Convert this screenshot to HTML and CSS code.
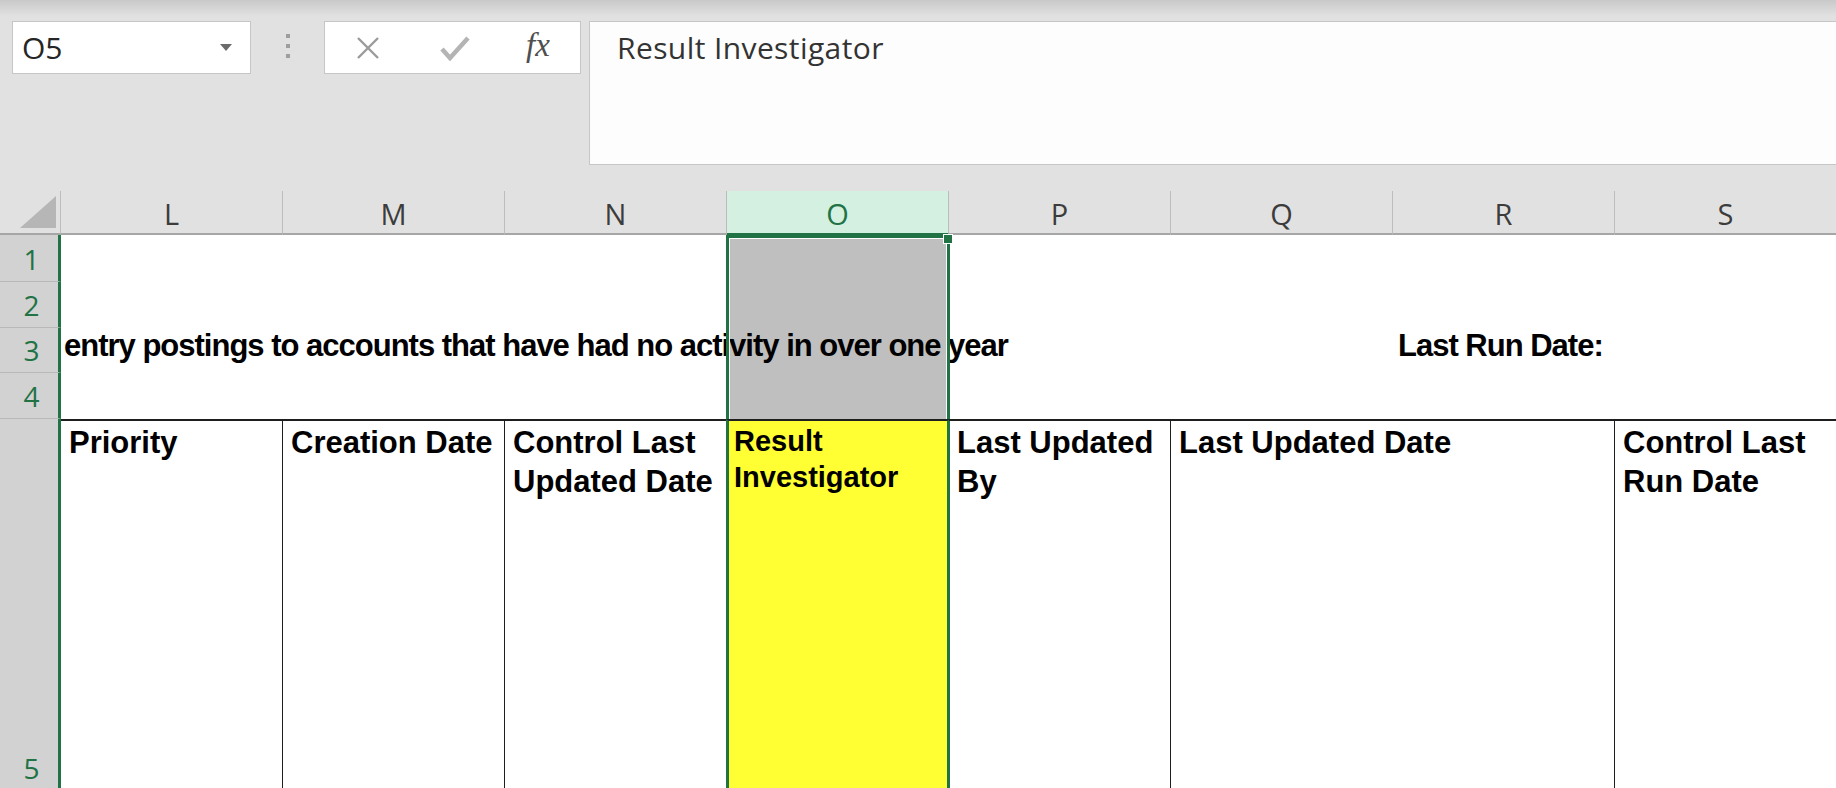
FILE: index.html
```html
<!DOCTYPE html>
<html lang="en">
<head>
    <meta charset="UTF-8">
    <title>Result Investigator</title>
    <link rel="stylesheet" href="styles.css">
</head>
<body>
    <div class="toolbar">
        <div class="namebox">
            <span class="namebox-ref">O5</span>
            <svg class="namebox-arrow" width="12" height="7" viewBox="0 0 12 7"><polygon points="0,0 12,0 6,7" fill="#6b6b6b"/></svg>
        </div>
        <div class="grip"><span></span><span></span><span></span></div>
        <div class="fx-buttons">
            <svg class="fx-icon" width="24" height="24" viewBox="0 0 24 24"><path d="M2 2 L22 22 M22 2 L2 22" stroke="#9b9b9b" stroke-width="2.4" fill="none"/></svg>
            <svg class="fx-icon" width="30" height="26" viewBox="0 0 30 26"><path d="M2 14 L10 23 L28 3" stroke="#b4b4b4" stroke-width="4.5" fill="none"/></svg>
            <span class="fx-label">fx</span>
        </div>
        <div class="formula-bar">Result Investigator</div>
    </div>

    <div class="sheet">
        <!-- cabeçalho das colunas -->
        <div class="corner">
            <svg width="40" height="34" viewBox="0 0 40 34"><polygon points="38,0 38,32 2,32" fill="#b6b6b6"/></svg>
        </div>
        <div class="col-head">L</div>
        <div class="col-head">M</div>
        <div class="col-head">N</div>
        <div class="col-head is-active">O</div>
        <div class="col-head">P</div>
        <div class="col-head">Q</div>
        <div class="col-head">R</div>
        <div class="col-head">S</div>

        <!-- linhas -->
        <div class="row-head rh-1">1</div>
        <div class="row-head rh-2">2</div>
        <div class="row-head rh-3">3</div>
        <div class="row-head rh-4">4</div>
        <div class="row-head rh-5">5</div>

        <div class="title-cell">entry postings to accounts that have had no activity in over one year</div>
        <div class="run-cell">Last Run Date:</div>

        <div class="select-shade"><span class="fill-handle"></span></div>

        <div class="field field-l">Priority</div>
        <div class="field field-m">Creation Date</div>
        <div class="field field-n">Control Last Updated Date</div>
        <div class="field field-o is-active">Result Investigator</div>
        <div class="field field-p">Last Updated By</div>
        <div class="field field-q">Last Updated Date</div>
        <div class="field field-s">Control Last Run Date</div>
    </div>
</body>
</html>
```

FILE: styles.css
```css
* {
    margin: 0;
    padding: 0;
    box-sizing: border-box;
}

body {
    width: 1836px;
    height: 788px;
    overflow: hidden;
    background-color: #e1e1e1;
    font-family: 'Open Sans', 'Noto Sans', sans-serif;
}

/* Barra de fórmulas */
.toolbar {
    height: 191px;
    padding-top: 21px;
    display: flex;
    align-items: flex-start;
    background: linear-gradient(#c9c9c9, #e1e1e1 16px);
}

.namebox {
    width: 239px;
    height: 53px;
    margin-left: 12px;
    background: #fff;
    border: 1px solid #c6c6c6;
    display: flex;
    align-items: center;
    justify-content: space-between;
    padding: 0 18px 0 9px;
}

.namebox-ref {
    font-size: 30px;
    color: #262626;
    line-height: 1;
}

.grip {
    width: 73px;
    height: 53px;
    display: flex;
    flex-direction: column;
    align-items: center;
    justify-content: center;
    gap: 6px;
    padding-bottom: 4px;
}

.grip span {
    width: 4px;
    height: 4px;
    background: #9e9e9e;
}

.fx-buttons {
    width: 257px;
    height: 53px;
    background: #fff;
    border: 1px solid #c6c6c6;
    display: flex;
    align-items: center;
    padding-left: 31px;
    gap: 60px;
}

.fx-label {
    font-family: 'Liberation Serif', serif;
    font-style: italic;
    font-size: 33px;
    color: #4f4f4f;
    margin-left: -4px;
    margin-top: -4px;
}

.formula-bar {
    flex: 1;
    height: 144px;
    margin-left: 8px;
    margin-right: -4px;
    background: #fdfdfd;
    border: 1px solid #c6c6c6;
    padding: 6px 27px;
    font-size: 30px;
    letter-spacing: 0.4px;
    line-height: 40px;
    color: #333;
}

/* Planilha */
.sheet {
    display: grid;
    grid-template-columns: 61px repeat(8, 222px);
    grid-template-rows: 44px 47px 46px 45px 46px 372px;
    background: #fff;
}

.corner {
    background: #e1e1e1;
    border-right: 1px solid #bdbdbd;
    border-bottom: 2px solid #a6a6a6;
    display: flex;
    align-items: flex-end;
    justify-content: flex-end;
    padding: 0 2px 3px 0;
}

.col-head {
    background: #e1e1e1;
    border-right: 1px solid #bdbdbd;
    border-bottom: 2px solid #a6a6a6;
    display: flex;
    align-items: center;
    justify-content: center;
    font-size: 29px;
    color: #3c3c3c;
    padding-top: 2px;
}

.col-head.is-active {
    background: #d3f0e0;
    color: #217346;
    border-bottom-color: #217346;
}

.row-head {
    grid-column: 1;
    background: #d2d2d2;
    border-right: 3px solid #217346;
    border-bottom: 1px solid #b9b9b9;
    display: flex;
    align-items: flex-end;
    justify-content: center;
    padding: 0 0 6px 5px;
    font-size: 28px;
    line-height: 32px;
    color: #217346;
}

.rh-1 { grid-row: 2; }
.rh-2 { grid-row: 3; }
.rh-3 { grid-row: 4; }
.rh-4 { grid-row: 5; }
.rh-5 { grid-row: 6; }

.title-cell,
.run-cell {
    grid-row: 4;
    white-space: nowrap;
    font-family: 'Liberation Sans', Arial, sans-serif;
    font-weight: bold;
    font-size: 31px;
    line-height: 36px;
    color: #000;
    display: flex;
    align-items: flex-end;
    padding: 0 0 9px 3px;
}

.title-cell {
    grid-column: 2 / 8;
    letter-spacing: -1px;
}

.run-cell {
    grid-column: 8 / 10;
    padding-left: 5px;
    letter-spacing: -1px;
}

/* Seleção O1:O5 */
.select-shade {
    grid-row: 2 / 6;
    grid-column: 5;
    position: relative;
    margin: 0 -1px;
    background: rgba(0, 0, 0, 0.25);
    border: 3px solid #217346;
    border-bottom: none;
    box-shadow: inset 1px 1px 0 #fff, inset -1px 0 0 #fff;
}

.fill-handle {
    position: absolute;
    top: -4px;
    right: -6px;
    width: 10px;
    height: 10px;
    background: #217346;
    border: 1px solid #fff;
}

/* Cabeçalhos da tabela (linha 5) */
.field {
    grid-row: 6;
    border-top: 2px solid #1e1e1e;
    border-right: 1px solid #1e1e1e;
    padding: 2px 6px 0 8px;
    font-family: 'Liberation Sans', Arial, sans-serif;
    font-weight: bold;
    font-size: 31px;
    line-height: 39px;
    color: #000;
}

.field-l { grid-column: 2; }
.field-m { grid-column: 3; }
.field-n { grid-column: 4; }
.field-o { grid-column: 5; }
.field-p { grid-column: 6; }
.field-q { grid-column: 7 / 9; }
.field-s { grid-column: 9; }

.field.is-active {
    margin: 0 -1px;
    background: #ffff33;
    border-left: 3px solid #217346;
    border-right: 3px solid #217346;
    padding: 2px 4px 0 5px;
    font-size: 29px;
    line-height: 36px;
}
```
